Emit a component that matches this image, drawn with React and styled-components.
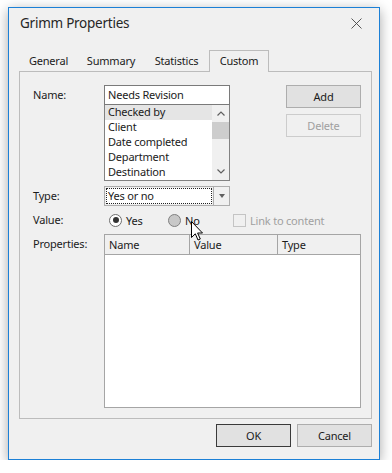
import React from 'react';
import styled, { createGlobalStyle, css } from 'styled-components';

const GlobalStyle = createGlobalStyle`
  html, body {
    margin: 0;
    background: #ffffff;
  }
  body {
    font-family: "Segoe UI", "Noto Sans", "Open Sans", sans-serif;
    font-size: 11px;
    letter-spacing: -0.2px;
    color: #1b1b1b;
  }
  * { box-sizing: border-box; }
`;

const Page = styled.div`
  padding: 7px 0 0 8px;
`;

const Window = styled.div`
  width: 372px;
  height: 453px;
  border: 1px solid #1c80d6;
  background: #f0f0f0;
  box-shadow: 0 3px 12px rgba(0, 0, 0, 0.35);
  display: flex;
  flex-direction: column;
`;

const TitleBar = styled.div`
  height: 30px;
  display: flex;
  align-items: center;
  justify-content: space-between;
  padding-left: 11px;
`;

const Title = styled.span`
  font-size: 13.5px;
  letter-spacing: -0.25px;
  color: #262626;
`;

const CloseButton = styled.div`
  width: 46px;
  height: 30px;
  display: flex;
  align-items: center;
  justify-content: center;
`;

const Body = styled.div`
  flex: 1;
  display: flex;
  flex-direction: column;
  padding: 12px 7px 12px 10px;
`;

const TabStrip = styled.div`
  display: flex;
  align-items: flex-end;
  height: 22px;
  margin-bottom: -1px;
`;

const Tab = styled.div`
  width: ${p => p.$width}px;
  text-align: center;
  line-height: 16px;
  border: 1px solid transparent;
  border-bottom: none;
  padding: 0 0 3px;
  ${p => p.$active && css`
    position: relative;
    z-index: 1;
    border-color: #bcbcbc;
    background: #f0f0f0;
    padding: 2px 0 3px;
  `}
`;

const Panel = styled.div`
  flex: 1;
  border: 1px solid #bcbcbc;
  padding: 13px 10px 10px 13px;
  display: flex;
  flex-direction: column;
  gap: 5px;
`;

const Row = styled.div`
  display: flex;
  align-items: flex-start;
  flex: ${p => (p.$grow ? 1 : 'none')};
`;

const Label = styled.div`
  width: 71px;
  line-height: ${p => p.$line || 20}px;
  flex: none;
`;

const FieldStack = styled.div`
  width: 126px;
  display: flex;
  flex-direction: column;
`;

const TextInput = styled.div`
  height: 20px;
  border: 1px solid #7a7a7a;
  background: #fff;
  padding-left: 3px;
  line-height: 17px;
`;

const ListBox = styled.div`
  height: 76px;
  border: 1px solid #828282;
  border-top: none;
  background: #fff;
  display: flex;
`;

const ListItems = styled.div`
  flex: 1;
  overflow: hidden;
`;

const ListItem = styled.div`
  height: 15px;
  line-height: 14px;
  padding-left: 3px;
  background: ${p => (p.$selected ? '#e5e5e5' : 'transparent')};
`;

const ScrollBar = styled.div`
  width: 17px;
  background: #f0f0f0;
  display: flex;
  flex-direction: column;
`;

const ScrollArrow = styled.div`
  height: 17px;
  display: flex;
  align-items: center;
  justify-content: center;
`;

const ScrollThumb = styled.div`
  height: 17px;
  background: #cdcdcd;
`;

const ScrollTrack = styled.div`
  flex: 1;
`;

const ButtonColumn = styled.div`
  margin-left: auto;
  display: flex;
  flex-direction: column;
  gap: 6px;
`;

const Button = styled.div`
  width: 75px;
  height: 23px;
  border: 1px solid #adadad;
  background: #e1e1e1;
  display: flex;
  align-items: center;
  justify-content: center;
  ${p => p.$disabled && css`
    border-color: #cccccc;
    background: #f0f0f0;
    color: #a0a0a0;
  `}
  ${p => p.$primary && css`
    border-color: #3a3a3a;
  `}
`;

const Combo = styled.div`
  width: 126px;
  height: 20px;
  border: 1px solid #adadad;
  display: flex;
`;

const ComboText = styled.div`
  flex: 1;
  margin: 1px;
  border: 1px dotted #222;
  background: #fff;
  padding-left: 1px;
  line-height: 14px;
`;

const ComboButton = styled.div`
  width: 16px;
  border-left: 1px solid #adadad;
  background: #f0f0f0;
  display: flex;
  align-items: center;
  justify-content: center;
`;

const DownTriangle = styled.div`
  width: 0;
  height: 0;
  border-left: 3.5px solid transparent;
  border-right: 3.5px solid transparent;
  border-top: 4px solid #606060;
`;

const ValueRow = styled.div`
  display: flex;
  align-items: center;
  height: 18px;
  padding-left: 5px;
`;

const Choice = styled.div`
  position: relative;
  width: ${p => (p.$width ? `${p.$width}px` : 'auto')};
  display: flex;
  align-items: center;
  gap: 4px;
  color: ${p => (p.$disabled ? '#a0a0a0' : 'inherit')};
`;

const Radio = styled.div`
  width: 13px;
  height: 13px;
  border-radius: 50%;
  border: 1px solid ${p => (p.$hover ? '#808080' : '#6e6e6e')};
  background: ${p => (p.$hover ? '#c8c8c8' : '#fff')};
  display: flex;
  align-items: center;
  justify-content: center;
  &::after {
    content: '';
    display: ${p => (p.$checked ? 'block' : 'none')};
    width: 6px;
    height: 6px;
    border-radius: 50%;
    background: #333;
  }
`;

const CheckBox = styled.div`
  width: 13px;
  height: 13px;
  border: 1px solid #c4c4c4;
`;

const Pointer = styled.svg`
  position: absolute;
  left: 23px;
  top: 8px;
`;

const ListView = styled.div`
  flex: 1;
  align-self: stretch;
  border: 1px solid #a5a5a5;
  background: #fff;
  display: flex;
  flex-direction: column;
`;

const HeaderRow = styled.div`
  display: flex;
  height: 20px;
  border-bottom: 1px solid #a5a5a5;
  background: #f0f0f0;
`;

const HeaderCell = styled.div`
  width: ${p => (p.$width ? `${p.$width}px` : 'auto')};
  flex: ${p => (p.$width ? 'none' : 1)};
  border-right: ${p => (p.$last ? 'none' : '1px solid #a5a5a5')};
  padding-left: 4px;
  line-height: 19px;
`;

const Footer = styled.div`
  display: flex;
  justify-content: flex-end;
  gap: 6px;
  margin-top: 5px;
`;

const items = ['Checked by', 'Client', 'Date completed', 'Department', 'Destination'];

const tabs = [
  { label: 'General', width: 59 },
  { label: 'Summary', width: 66 },
  { label: 'Statistics', width: 65 },
  { label: 'Custom', width: 60, active: true },
];

function Chevron({ up }) {
  return (
    <svg width="8" height="5" viewBox="0 0 8 5">
      <path
        d={up ? 'M0.5 4.5 L4 1 L7.5 4.5' : 'M0.5 0.5 L4 4 L7.5 0.5'}
        fill="none"
        stroke="#606060"
        strokeWidth="1.2"
      />
    </svg>
  );
}

export default function App() {
  return (
    <>
      <GlobalStyle />
      <Page>
        <Window>
          <TitleBar>
            <Title>Grimm Properties</Title>
            <CloseButton>
              <svg width="11" height="11" viewBox="0 0 11 11">
                <path d="M0.5 0.5 L10.5 10.5 M10.5 0.5 L0.5 10.5" stroke="#444" strokeWidth="0.9" />
              </svg>
            </CloseButton>
          </TitleBar>
          <Body>
            <TabStrip>
              {tabs.map(t => (
                <Tab key={t.label} $width={t.width} $active={t.active}>{t.label}</Tab>
              ))}
            </TabStrip>
            <Panel>
              <Row>
                <Label>Name:</Label>
                <FieldStack>
                  <TextInput>Needs Revision</TextInput>
                  <ListBox>
                    <ListItems>
                      {items.map((it, i) => (
                        <ListItem key={it} $selected={i === 0}>{it}</ListItem>
                      ))}
                    </ListItems>
                    <ScrollBar>
                      <ScrollArrow><Chevron up /></ScrollArrow>
                      <ScrollThumb />
                      <ScrollTrack />
                      <ScrollArrow><Chevron /></ScrollArrow>
                    </ScrollBar>
                  </ListBox>
                </FieldStack>
                <ButtonColumn>
                  <Button>Add</Button>
                  <Button $disabled>Delete</Button>
                </ButtonColumn>
              </Row>
              <Row>
                <Label>Type:</Label>
                <Combo>
                  <ComboText>Yes or no</ComboText>
                  <ComboButton><DownTriangle /></ComboButton>
                </Combo>
              </Row>
              <Row>
                <Label $line={18}>Value:</Label>
                <ValueRow>
                  <Choice $width={59}>
                    <Radio $checked />
                    <span>Yes</span>
                  </Choice>
                  <Choice $width={65}>
                    <Radio $hover />
                    <span>No</span>
                    <Pointer width="13" height="21" viewBox="0 0 13 21">
                      <path
                        d="M0.5 0.5 L0.5 16.5 L4.3 12.8 L7 19 L9.3 18 L6.6 12 L11.5 12 Z"
                        fill="#fff"
                        stroke="#000"
                        strokeWidth="1"
                      />
                    </Pointer>
                  </Choice>
                  <Choice $disabled>
                    <CheckBox />
                    <span>Link to content</span>
                  </Choice>
                </ValueRow>
              </Row>
              <Row $grow>
                <Label>Properties:</Label>
                <ListView>
                  <HeaderRow>
                    <HeaderCell $width={85}>Name</HeaderCell>
                    <HeaderCell $width={88}>Value</HeaderCell>
                    <HeaderCell $last>Type</HeaderCell>
                  </HeaderRow>
                </ListView>
              </Row>
            </Panel>
            <Footer>
              <Button $primary>OK</Button>
              <Button>Cancel</Button>
            </Footer>
          </Body>
        </Window>
      </Page>
    </>
  );
}
